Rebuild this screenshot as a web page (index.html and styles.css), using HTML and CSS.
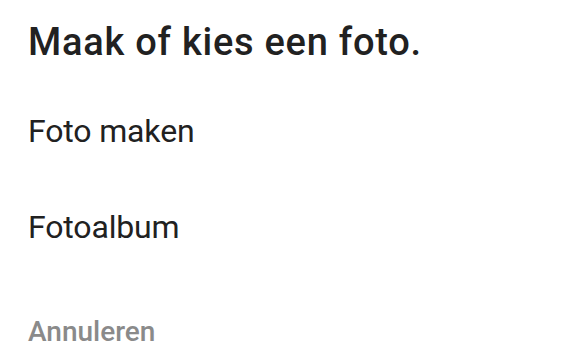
FILE: index.html
```html
<!DOCTYPE html>
<html lang="nl">
<head>
<meta charset="utf-8">
<link rel="stylesheet" href="styles.css">
</head>
<body>
<div class="dialog">
  <h1 class="title">Maak of kies een foto.</h1>
  <ul class="options">
    <li class="option">Foto maken</li>
    <li class="option">Fotoalbum</li>
  </ul>
  <div class="actions">
    <span class="cancel">Annuleren</span>
  </div>
</div>
</body>
</html>
```

FILE: styles.css
```css
html, body {
  margin: 0;
  padding: 0;
  background: #ffffff;
}
body {
  font-family: Roboto, "Liberation Sans", sans-serif;
  width: 581px;
  height: 363px;
  overflow: hidden;
}
.dialog {
  padding: 18px 0 0 28px;
}
.title {
  margin: 0;
  font-size: 38px;
  line-height: 48px;
  font-weight: 500;
  letter-spacing: 0.75px;
  color: #212121;
}
.options {
  list-style: none;
  margin: 17px 0 0 0;
  padding: 0;
}
.option {
  font-size: 32px;
  line-height: 96px;
  height: 96px;
  font-weight: 400;
  letter-spacing: -0.15px;
  color: #212121;
}
.actions {
  margin-top: 37px;
}
.cancel {
  display: block;
  font-size: 28px;
  line-height: 40px;
  font-weight: 500;
  color: #8a8a8a;
}
```
